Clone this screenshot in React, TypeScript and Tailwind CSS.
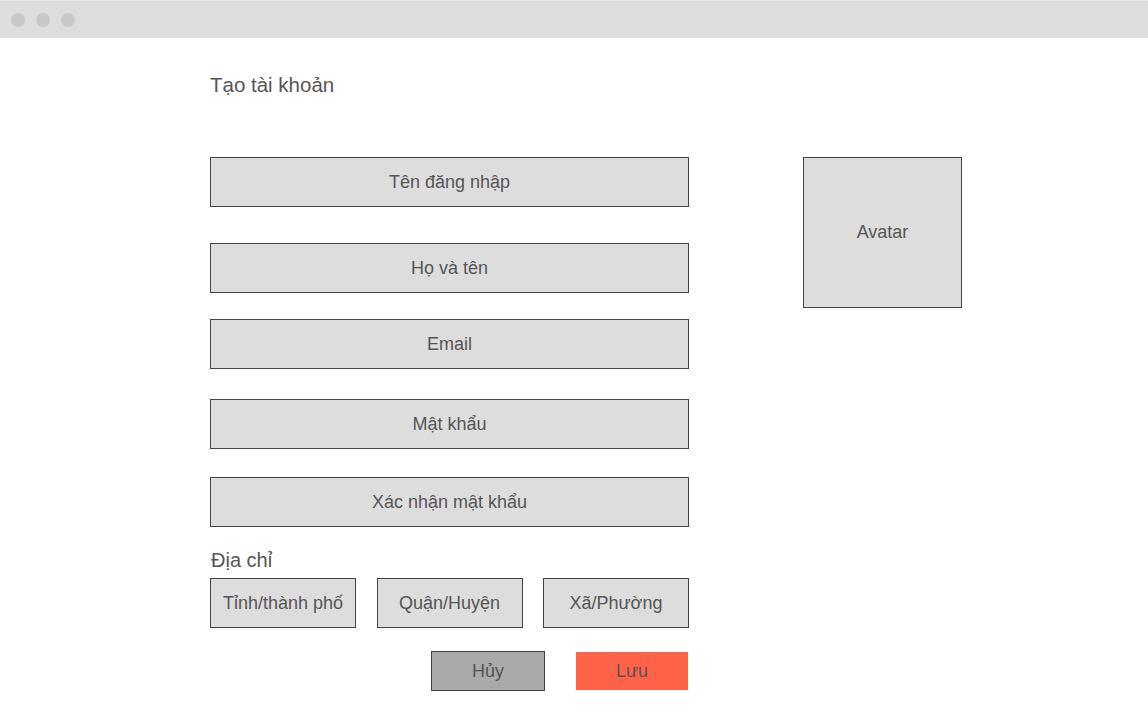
const field =
  "h-[50px] w-full flex items-center justify-center bg-[#dddddd] border border-[#444444] text-[18px] text-[#555555]";
const small =
  "h-[50px] w-[146px] flex items-center justify-center bg-[#dddddd] border border-[#444444] text-[18px] text-[#555555]";

export default function App() {
  return (
    <div
      className="min-h-[712px] w-full bg-white"
      style={{ fontFamily: '"Liberation Sans", Arial, sans-serif' }}
    >
      {/* window chrome */}
      <div className="h-[38px] bg-[#dddddd] border-t border-[#e6e6e6] flex items-center gap-[11px] pl-[11px]">
        <span className="w-[14px] h-[14px] rounded-full bg-[#c8c8c8]" />
        <span className="w-[14px] h-[14px] rounded-full bg-[#c8c8c8]" />
        <span className="w-[14px] h-[14px] rounded-full bg-[#c8c8c8]" />
      </div>

      <div className="pl-[210px] pt-[35px]">
        <h1 className="text-[20.5px] leading-[24px] text-[#555555]">Tạo tài khoản</h1>

        <div className="flex items-start mt-[60px]">
          {/* form */}
          <div className="w-[479px] flex flex-col">
            <div className={field}>Tên đăng nhập</div>
            <div className={field + " mt-[36px]"}>Họ và tên</div>
            <div className={field + " mt-[26px]"}>Email</div>
            <div className={field + " mt-[30px]"}>Mật khẩu</div>
            <div className={field + " mt-[28px]"}>Xác nhận mật khẩu</div>

            <div className="mt-[21px] text-[20px] leading-[24px] text-[#555555] pl-px">Địa chỉ</div>
            <div className="mt-[6px] flex justify-between">
              <div className={small}>Tỉnh/thành phố</div>
              <div className={small}>Quận/Huyện</div>
              <div className={small}>Xã/Phường</div>
            </div>

            <div className="mt-[23px] flex items-center justify-end gap-[31px] pr-px">
              <button className="h-[40px] w-[114px] bg-[#aaaaaa] border border-[#444444] text-[18px] text-[#555555]">
                Hủy
              </button>
              <button className="h-[38px] w-[112px] bg-[#ff6347] text-[18px] text-[#555555]">
                Lưu
              </button>
            </div>
          </div>

          {/* avatar */}
          <div className="ml-[114px] w-[159px] h-[151px] flex items-center justify-center bg-[#dddddd] border border-[#444444] text-[18px] text-[#555555]">
            Avatar
          </div>
        </div>
      </div>
    </div>
  );
}
